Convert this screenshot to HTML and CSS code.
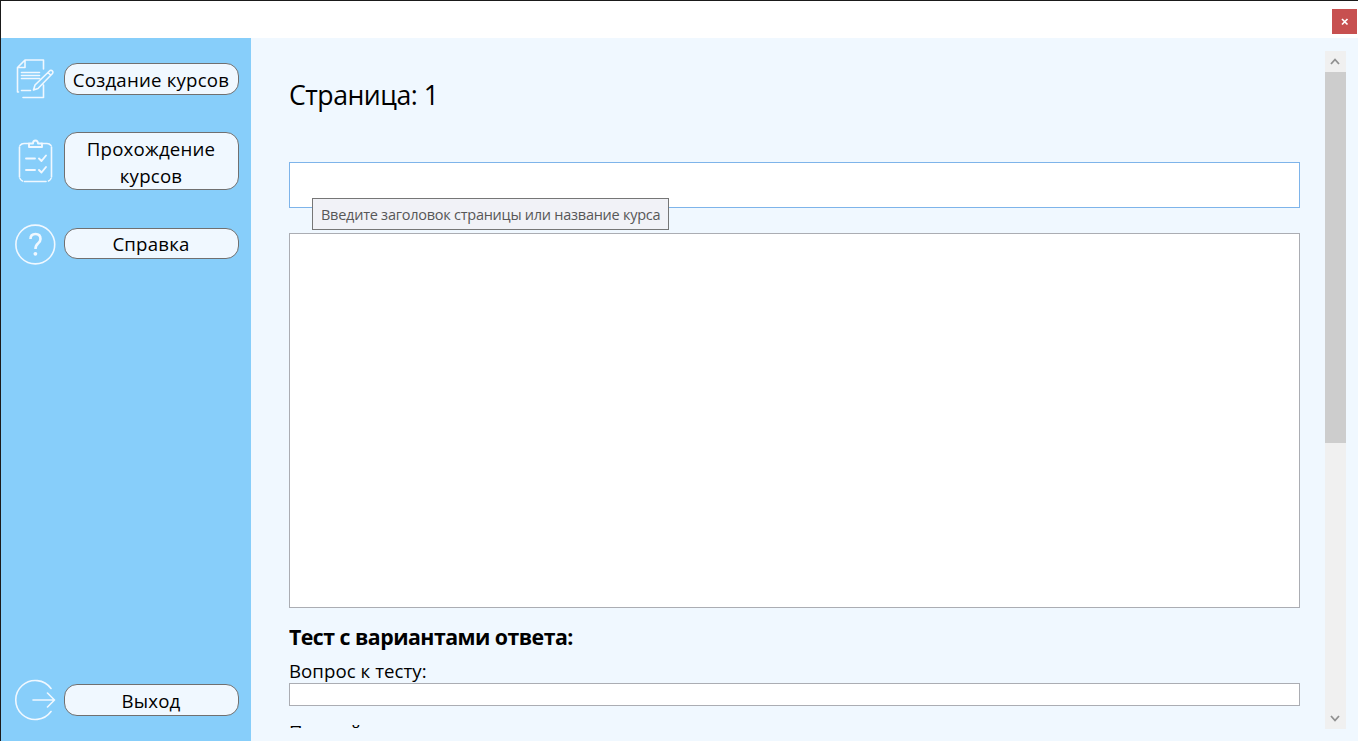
FILE: index.html
```html
<!DOCTYPE html>
<html lang="ru">
<head>
<meta charset="utf-8">
<title>Создание курсов</title>
<link rel="stylesheet" href="styles.css">
</head>
<body>
<div class="window">
  <header class="titlebar">
    <button class="close" aria-label="Закрыть"><svg width="8" height="8" viewBox="0 0 8 8"><path d="M1 1l5.500 5.500M6.500 1L1 6.500"/></svg></button>
  </header>
  <div class="body">
    <nav class="sidebar">
      <div class="item">
        <svg class="icon" width="42" height="42" viewBox="0 0 42 42"><path d="M3.500 34V9.500L11 2h18.500v9M11 2v7.500H3.500M29.500 27v12.500H9M3.500 34h1M7.500 14.500h18M7.500 17.500h18M7.500 20.500h18M7.500 32.500h9M19.500 32l1.500-5L36 12.500q1.500-0.500 2.500 0.500t0 2.500L24 30.500zM34 14.500l2.500 2.500"/></svg>
        <button class="btn">Создание курсов</button>
      </div>
      <div class="item item-tall">
        <svg class="icon" width="42" height="44" viewBox="0 0 42 44"><path d="M5.500 8v30M10.500 42.500h21.500M37.500 8v30M10 4.500q-2.500 0-4 2M33 4.500q2.500 0 4 2M6 39.500q1 2 2.500 2.500M37 39.500q-1 2-2.500 2.500M10 4.500h5M27.500 4.500H33"/><path d="M15 4.500v3.500h13V4.500h-4q0-3-2.500-3t-2.500 3zM12 19.500h9M12 31h9M25 19.500l2.500 2.500 4.500-5.500M25 31l2.500 2.500 4.500-5.500" class="bold"/></svg>
        <button class="btn btn-tall">Прохождение курсов</button>
      </div>
      <div class="item item-help">
        <svg class="icon" width="42" height="42" viewBox="0 0 42 42"><circle cx="21.300" cy="21.500" r="19.400"/><path class="mark" d="M16.500 16q0-5 5-5t5 5q0 2.500-2.500 4.500-2.500 2-2.500 5.500"/><circle class="dot" cx="21.400" cy="30.800" r="1.900"/></svg>
        <button class="btn btn-short">Справка</button>
      </div>
      <div class="item item-exit">
        <svg class="icon" width="42" height="42" viewBox="0 0 42 42"><path d="M37 9.500A19.500 19.500 0 1 0 37 32.500M19 21h21.500M33.500 14l7 7-7 7"/></svg>
        <button class="btn">Выход</button>
      </div>
    </nav>
    <main class="main">
      <div class="content">
        <h1 class="title">Страница: 1</h1>
        <div class="heading-field">
          <input class="field field-heading" aria-label="Заголовок">
          <div class="tooltip">Введите заголовок страницы или название курса</div>
        </div>
        <textarea class="field field-text" aria-label="Текст страницы"></textarea>
        <h2 class="subtitle">Тест с вариантами ответа:</h2>
        <label class="label">Вопрос к тесту:</label>
        <input class="field field-question" aria-label="Вопрос к тесту">
        <label class="label label-answer">Первый ответ:</label>
      </div>
      <div class="scrollbar">
        <svg class="arrow" width="21" height="21" viewBox="0 0 21 21"><path d="M6 13l4-4.500 4 4.500"/></svg>
        <div class="thumb"></div>
        <svg class="arrow arrow-down" width="21" height="21" viewBox="0 0 21 21"><path d="M6 8l4 4.500 4-4.500"/></svg>
      </div>
    </main>
  </div>
</div>
</body>
</html>
```
FILE: styles.css
```css
* { box-sizing: border-box; }
body { margin: 0; font-family: "Open Sans", "Noto Sans", sans-serif; color: #000; }
button { font: inherit; color: inherit; padding: 0; }
.window { height: 741px; display: flex; flex-direction: column; border-top: 1px solid #1a1a1a; border-left: 1px solid #1a1a1a; overflow: hidden; background: #fff; }
.titlebar { height: 37px; flex: none; display: flex; justify-content: flex-end; align-items: flex-start; padding: 8px 1px 0 0; }
.close { width: 25px; height: 25px; background: #c75050; border: 0; display: flex; align-items: center; justify-content: center; }
.close svg { fill: none; stroke: #fff; stroke-width: 1.7; }
.body { flex: 1; display: flex; min-height: 0; }
.sidebar { width: 250px; background: #87cefa; display: flex; flex-direction: column; padding: 20px 12px 20px 13px; }
.item { display: flex; align-items: center; gap: 8px; height: 42px; }
.item-tall { height: 58px; margin: 32px 0; }
.item-help { height: 43px; }
.item-exit { margin-top: auto; }
.icon { flex: none; fill: none; stroke: #f0f8ff; stroke-width: 1.6; stroke-linecap: round; stroke-linejoin: round; }
.icon .bold { stroke-width: 1.9; }
.icon .mark { stroke-width: 2.6; stroke-linecap: butt; }
.icon .dot { fill: #f0f8ff; stroke: none; }
.btn { width: 175px; height: 32px; border: 1px solid #707070; border-radius: 13px; background: #f0f8ff; font-size: 18.67px; line-height: 27px; letter-spacing: 0.2px; padding: 0 1px 0 0; white-space: nowrap; }
.btn-tall { height: 58px; white-space: normal; padding: 2px 19px 0 18px; }
.btn-short { height: 31px; }
.main { flex: 1; background: #f0f8ff; display: flex; justify-content: space-between; padding: 13px 12px 12px 38px; min-width: 0; }
.content { width: 1011px; height: 677px; overflow: hidden; display: flex; flex-direction: column; }
.title { margin: 26px 0 49px; font-size: 26.67px; line-height: 36px; font-weight: 400; letter-spacing: -0.5px; }
.heading-field { position: relative; height: 46px; margin-bottom: 25px; }
.field { display: block; width: 100%; margin: 0; padding: 0; border: 1px solid #abadb3; border-radius: 0; background: #fff; resize: none; outline: 0; flex: none; }
.field-heading { height: 46px; border-color: #7eb4ea; }
.field-text { height: 375px; }
.field-question { height: 23px; }
.tooltip { position: absolute; left: 23px; top: 36px; width: 357px; height: 32px; border: 1px solid #767676; background: #f1f2f7; color: #575757; font-size: 14.5px; line-height: 31px; letter-spacing: -0.25px; padding-left: 8px; white-space: nowrap; }
.subtitle { margin: 14px 0 7px; font-size: 21.33px; line-height: 29px; font-weight: 700; letter-spacing: -0.54px; }
.label { font-size: 18.67px; line-height: 25px; flex: none; letter-spacing: 0.05px; }
.label-answer { margin-top: 13px; }
.scrollbar { width: 21px; background: #f0f0f0; display: flex; flex-direction: column; }
.arrow { flex: none; fill: none; stroke: #909090; stroke-width: 1.8; }
.arrow-down { margin-top: auto; }
.thumb { height: 371px; background: #cdcdcd; }
```
